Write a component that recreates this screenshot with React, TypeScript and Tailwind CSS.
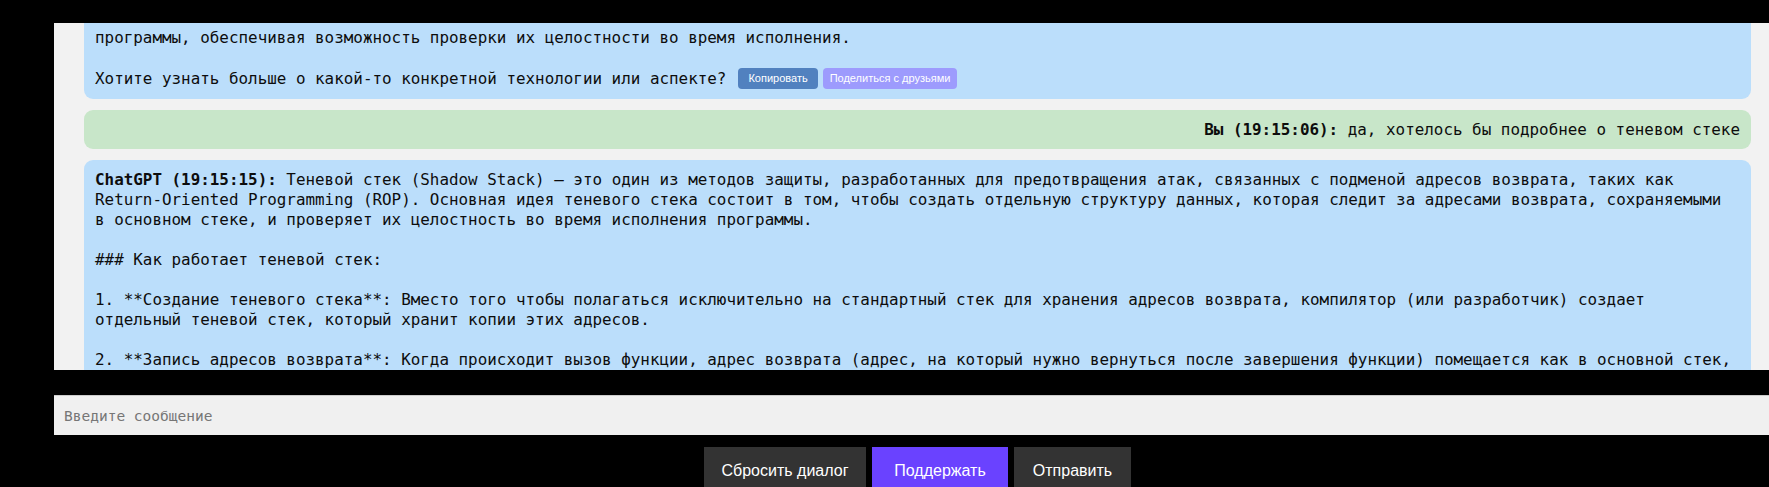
import React from "react"

const prevLine =
  "- **Контроль целостности потока управления** (CFI): проверяет, что переходы и вызовы выполняются только по допустимым адресам, заданным на этапе компиляции"

const gptLines: React.ReactNode[] = [
  <>
    <b>ChatGPT (19:15:15):</b> Теневой стек (Shadow Stack) — это один из методов защиты, разработанных для предотвращения атак, связанных с подменой адресов возврата, таких как
  </>,
  "Return-Oriented Programming (ROP). Основная идея теневого стека состоит в том, чтобы создать отдельную структуру данных, которая следит за адресами возврата, сохраняемыми",
  "в основном стеке, и проверяет их целостность во время исполнения программы.",
  "",
  "### Как работает теневой стек:",
  "",
  "1. **Создание теневого стека**: Вместо того чтобы полагаться исключительно на стандартный стек для хранения адресов возврата, компилятор (или разработчик) создает",
  "отдельный теневой стек, который хранит копии этих адресов.",
  "",
  "2. **Запись адресов возврата**: Когда происходит вызов функции, адрес возврата (адрес, на который нужно вернуться после завершения функции) помещается как в основной стек,",
  "и в теневой стек одновременно.",
]

export default function App() {
  return (
    <div className="w-[1769px] h-[487px] overflow-hidden bg-black">
      <div className="w-[1835px] px-[54px] pt-[23px]">
        {/* Chat history */}
        <div className="h-[347px] overflow-hidden bg-[#f2f2f2] px-[30px]">
          <div className="-mt-[25px] flex flex-col gap-[11px] font-['DejaVu_Sans_Mono',monospace] text-[15.9px] leading-[20px] text-[#0d0d0d]">
            <div className="rounded-[9px] bg-[#bbdefb] px-[11px] py-[10px]">
              <div className="-mt-[4px] mb-[4px] whitespace-nowrap">{prevLine}</div>
              <div className="whitespace-nowrap">программы, обеспечивая возможность проверки их целостности во время исполнения.</div>
              <div className="h-[20px]" />
              <div className="flex items-center h-[21px] whitespace-nowrap">
                <span>Хотите узнать больше о какой-то конкретной технологии или аспекте?</span>
                <button className="ml-[12px] h-[21px] rounded-[4px] bg-[#5181bf] px-[10px] font-['Liberation_Sans',sans-serif] text-[11px] leading-[21px] text-white">
                  Копировать
                </button>
                <button className="ml-[5px] h-[21px] rounded-[4px] bg-[#9d9bfd] px-[7px] font-['Liberation_Sans',sans-serif] text-[11px] leading-[21px] text-white">
                  Поделиться с друзьями
                </button>
              </div>
            </div>

            <div className="rounded-[9px] bg-[#c8e6c9] px-[11px] py-[10px] leading-[19px] text-right whitespace-nowrap">
              <b>Вы (19:15:06):</b> да, хотелось бы подробнее о теневом стеке
            </div>

            <div className="rounded-[9px] bg-[#bbdefb] px-[11px] py-[10px]">
              {gptLines.map((line, i) => (
                <div key={i} className="h-[20px] whitespace-nowrap">
                  {line}
                </div>
              ))}
            </div>
          </div>
        </div>

        {/* Input */}
        <div className="mt-[25px]">
          <input
            placeholder="Введите сообщение"
            className="block w-full h-[40px] border-t border-[#cccccc] bg-[#f0f0f0] px-[10px] font-['DejaVu_Sans_Mono',monospace] text-[14.5px] text-[#222] placeholder:text-[#767676] outline-none"
          />
        </div>

        {/* Actions */}
        <div className="mt-[12px] flex justify-center gap-[6px] font-['Liberation_Sans',sans-serif] text-[16px] text-white">
          <button className="w-[162px] h-[48px] bg-[#333333]">Сбросить диалог</button>
          <button className="w-[136px] h-[48px] bg-[#6a42ff]">Поддержать</button>
          <button className="w-[117px] h-[48px] bg-[#333333]">Отправить</button>
        </div>
      </div>
    </div>
  )
}
